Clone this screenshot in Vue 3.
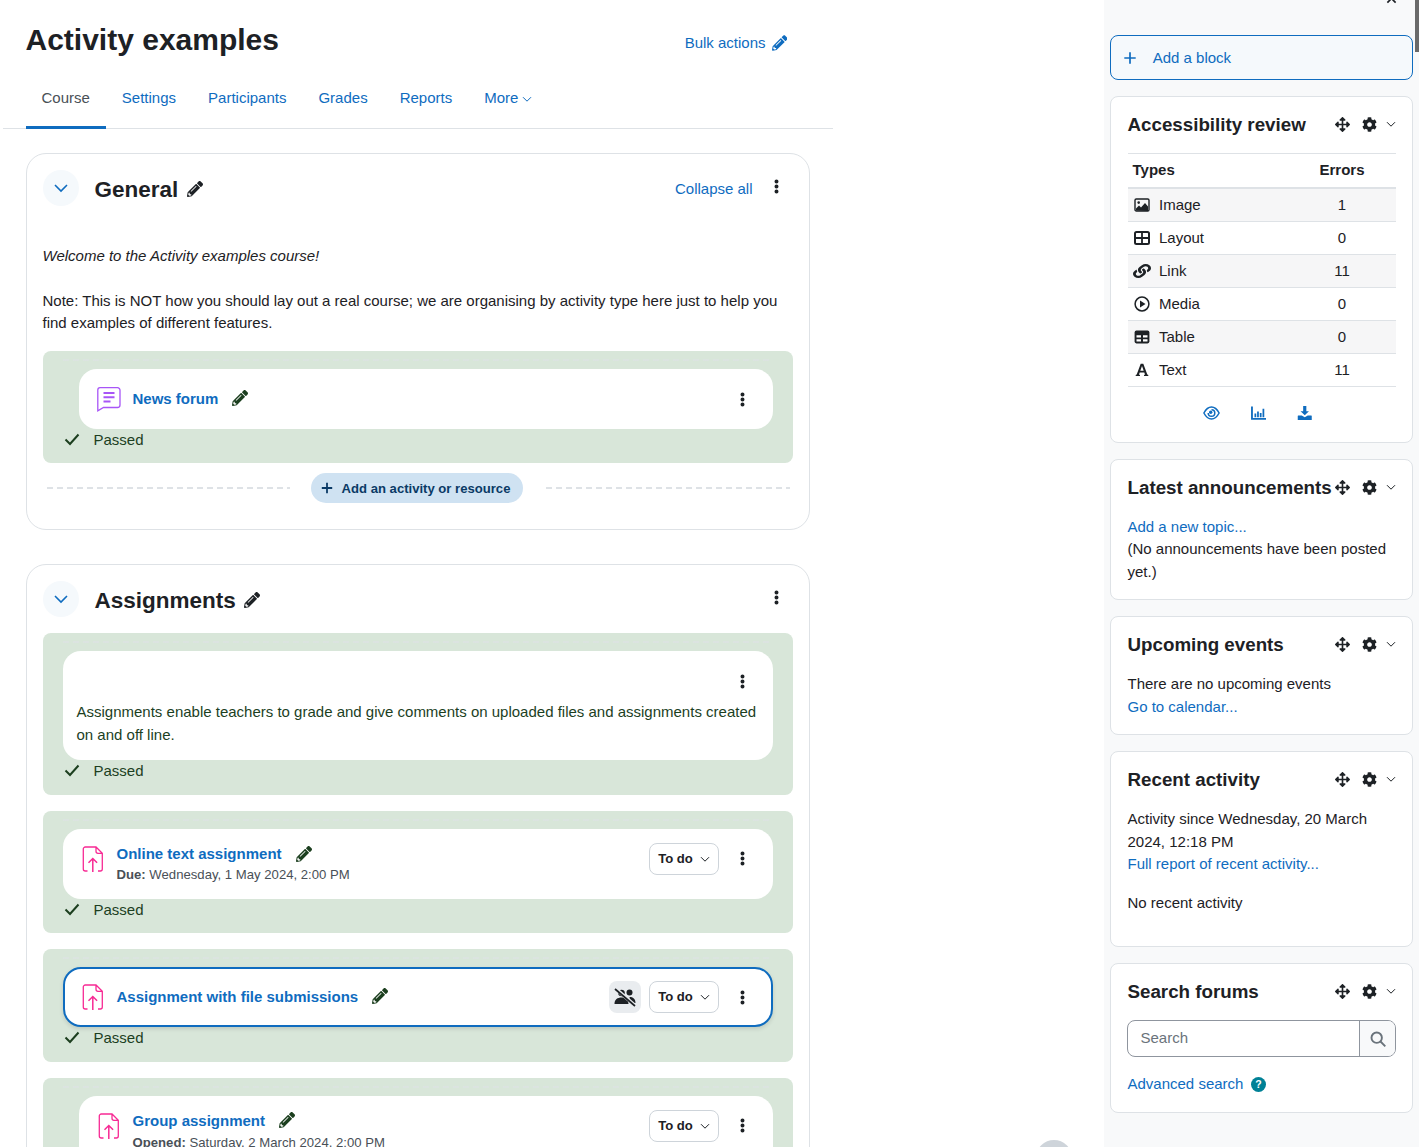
<script setup>
const pencil = 'M497.9 142.1l-46.1 46.1c-4.7 4.7-12.3 4.7-17 0l-111-111c-4.7-4.7-4.7-12.3 0-17l46.1-46.1c18.7-18.7 49.1-18.7 67.9 0l60.1 60.1c18.8 18.7 18.8 49.1 0 67.9zM284.2 99.8L21.6 362.4.4 483.9c-2.9 16.4 11.4 30.6 27.8 27.7l121.5-21.3 262.6-262.6c4.7-4.7 4.7-12.3 0-17l-111-111c-4.8-4.7-12.4-4.7-17.1 0zM124.1 339.9c-5.5-5.5-5.5-14.3 0-19.8l154-154c5.5-5.5 14.3-5.5 19.8 0s5.5 14.3 0 19.8l-154 154c-5.5 5.5-14.3 5.5-19.8 0zM88 424h48v36.3l-64.5 11.3-31.1-31.1L51.7 376H88v48z'
const cog = 'M487.4 315.7l-42.6-24.6c4.3-23.2 4.3-47 0-70.2l42.6-24.6c4.9-2.8 7.1-8.6 5.5-14-11.1-35.6-30-67.8-54.7-94.6-3.8-4.1-10-5.1-14.8-2.3L380.8 110c-17.9-15.4-38.5-27.3-60.8-35.1V25.8c0-5.6-3.9-10.5-9.4-11.7-36.7-8.2-74.3-7.8-109.2 0-5.5 1.2-9.4 6.1-9.4 11.7V75c-22.2 7.9-42.8 19.8-60.8 35.1L88.7 85.5c-4.9-2.8-11-1.9-14.8 2.3-24.7 26.7-43.6 58.9-54.7 94.6-1.7 5.4.6 11.2 5.5 14L67.3 221c-4.3 23.2-4.3 47 0 70.2l-42.6 24.6c-4.9 2.8-7.1 8.6-5.5 14 11.1 35.6 30 67.8 54.7 94.6 3.8 4.1 10 5.1 14.8 2.3l42.6-24.6c17.9 15.4 38.5 27.3 60.8 35.1v49.2c0 5.6 3.9 10.5 9.4 11.7 36.7 8.2 74.3 7.8 109.2 0 5.5-1.2 9.4-6.1 9.4-11.7v-49.2c22.2-7.9 42.8-19.8 60.8-35.1l42.6 24.6c4.9 2.8 11 1.9 14.8-2.3 24.7-26.7 43.6-58.9 54.7-94.6 1.5-5.5-.7-11.3-5.6-14.1zM256 336c-44.1 0-80-35.9-80-80s35.9-80 80-80 80 35.9 80 80-35.9 80-80 80z'
const move = 'M352.201 425.775l-79.196 79.196c-9.373 9.373-24.568 9.373-33.941 0l-79.196-79.196c-15.119-15.119-4.411-40.971 16.971-40.97h51.162L228 284H127.196v51.162c0 21.382-25.851 32.09-40.971 16.971L7.029 272.937c-9.373-9.373-9.373-24.569 0-33.941L86.225 159.8c15.119-15.119 40.971-4.411 40.971 16.971V228H228V127.196h-51.23c-21.382 0-32.09-25.851-16.971-40.971l79.196-79.196c9.373-9.373 24.568-9.373 33.941 0l79.196 79.196c15.119 15.119 4.411 40.971-16.971 40.971h-51.162V228h100.804v-51.162c0-21.382 25.851-32.09 40.97-16.971l79.196 79.196c9.373 9.373 9.373 24.569 0 33.941L425.773 352.2c-15.119 15.119-40.971 4.411-40.97-16.971V284H284v100.804h51.23c21.382 0 32.09 25.851 16.971 40.971z'
const link = 'M326.612 185.391c59.747 59.809 58.927 155.698.36 214.59-.11.12-.24.25-.36.37l-67.2 67.2c-59.27 59.27-155.699 59.262-214.96 0-59.27-59.26-59.27-155.7 0-214.96l37.106-37.106c9.84-9.84 26.786-3.3 27.294 10.606.648 17.722 3.826 35.527 9.69 52.721 1.986 5.822.567 12.262-3.783 16.612l-13.087 13.087c-28.026 28.026-28.905 73.66-1.155 101.96 28.024 28.579 74.086 28.749 102.325.51l67.2-67.19c28.191-28.191 28.073-73.757 0-101.83-3.701-3.694-7.429-6.564-10.341-8.569a16.037 16.037 0 0 1-6.947-12.606c-.396-10.567 3.348-21.456 11.698-29.806l21.054-21.055c5.521-5.521 14.182-6.199 20.584-1.731a152.482 152.482 0 0 1 20.522 17.197zM467.547 44.449c-59.261-59.262-155.69-59.27-214.96 0l-67.2 67.2c-.12.12-.25.25-.36.37-58.566 58.892-59.387 154.781.36 214.59a152.454 152.454 0 0 0 20.521 17.196c6.402 4.468 15.064 3.789 20.584-1.731l21.054-21.055c8.35-8.35 12.094-19.239 11.698-29.806a16.037 16.037 0 0 0-6.947-12.606c-2.912-2.005-6.64-4.875-10.341-8.569-28.073-28.073-28.191-73.639 0-101.83l67.2-67.19c28.239-28.239 74.3-28.069 102.325.51 27.75 28.3 26.872 73.934-1.155 101.96l-13.087 13.087c-4.35 4.35-5.769 10.79-3.783 16.612 5.864 17.194 9.042 34.999 9.69 52.721.509 13.906 17.454 20.446 27.294 10.606l37.106-37.106c59.271-59.259 59.271-155.699.001-214.959z'
const dots = 'M2.500.4a2 2 0 1 1 0 4 2 2 0 0 1 0-4zM2.500 5.500a2 2 0 1 1 0 4 2 2 0 0 1 0-4zM2.500 10.600a2 2 0 1 1 0 4 2 2 0 0 1 0-4z'
const chev = 'M1 3.200 5 7.200 9 3.200'
const tabs = ['Settings', 'Participants', 'Grades', 'Reports']
const a11y = [
  { k: 'image', n: 'Image', e: '1' },
  { k: 'layout', n: 'Layout', e: '0' },
  { k: 'link', n: 'Link', e: '11' },
  { k: 'media', n: 'Media', e: '0' },
  { k: 'table', n: 'Table', e: '0' },
  { k: 'text', n: 'Text', e: '11' }
]
const assignments = [
  { name: 'Online text assignment', label: 'Due:', date: 'Wednesday, 1 May 2024, 2:00 PM', cls: 'tall' },
  { name: 'Assignment with file submissions', nogroup: true, cls: 'focus' },
  { name: 'Group assignment', label: 'Opened:', date: 'Saturday, 2 March 2024, 2:00 PM', cls: 'tall indent' }
]
</script>

<template>
  <div class="page">
    <main class="main">
      <header class="head">
        <h1>Activity examples</h1>
        <a class="bulk">Bulk actions
          <svg class="ic16" viewBox="0 0 512 512"><path :d="pencil" /></svg>
        </a>
      </header>
      <nav class="tabs">
        <a class="tab active">Course</a>
        <a v-for="t in tabs" :key="t" class="tab">{{ t }}</a>
        <a class="tab">More
          <svg class="mini" viewBox="0 0 10 10"><path :d="chev" /></svg>
        </a>
      </nav>

      <section class="section first">
        <div class="sec-head">
          <span class="toggle"><svg viewBox="0 0 16 16"><path d="M2 5 8 11 14 5" /></svg></span>
          <h2>General</h2>
          <svg class="ic16 dark" viewBox="0 0 512 512"><path :d="pencil" /></svg>
          <span class="grow"></span>
          <a class="collapse">Collapse all</a>
          <svg class="dots sec-dots" viewBox="0 0 5 15"><path :d="dots" /></svg>
        </div>
        <div class="summary">
          <p><em>Welcome to the Activity examples course!</em></p>
          <p class="gap">Note: This is NOT how you should lay out a real course; we are organising by activity type here just to help you find examples of different features.</p>
        </div>
        <div class="box">
          <div class="card row indent news">
            <svg class="act-ic" viewBox="0 -1 24 26"><path d="M3 .7h17.500a2.500 2.500 0 0 1 2.500 2.500v14.800a2.500 2.500 0 0 1-2.500 2.500H6.500L.8 23.800V3A2.300 2.300 0 0 1 3 .7z" fill="none" stroke="#a855f7" stroke-width="1.300" /><path d="M6.500 6h11M6.500 10.300h11M6.500 14.600h7" stroke="#a855f7" stroke-width="2" fill="none" /></svg>
            <a class="act-name">News forum</a>
            <svg class="ic16 green" viewBox="0 0 512 512"><path :d="pencil" /></svg>
            <span class="grow"></span>
            <svg class="dots" viewBox="0 0 5 15"><path :d="dots" /></svg>
          </div>
          <div class="passed">
            <svg viewBox="0 0 16 16"><path d="M1.500 8.500 6 13 14.500 3.500" /></svg>
            <span>Passed</span>
          </div>
        </div>
        <div class="add-row">
          <span class="dash"></span>
          <button class="add-btn">
            <svg viewBox="0 0 12 12"><path d="M6 .8v10.400M.8 6h10.400" /></svg>
            Add an activity or resource
          </button>
          <span class="dash"></span>
        </div>
      </section>

      <section class="section second">
        <div class="sec-head">
          <span class="toggle"><svg viewBox="0 0 16 16"><path d="M2 5 8 11 14 5" /></svg></span>
          <h2>Assignments</h2>
          <svg class="ic16 dark" viewBox="0 0 512 512"><path :d="pencil" /></svg>
          <span class="grow"></span>
          <svg class="dots sec-dots" viewBox="0 0 5 15"><path :d="dots" /></svg>
        </div>
        <div class="box">
          <div class="card label-card">
            <div class="label-top">
              <svg class="dots" viewBox="0 0 5 15"><path :d="dots" /></svg>
            </div>
            <p>Assignments enable teachers to grade and give comments on uploaded files and assignments created on and off line.</p>
          </div>
          <div class="passed">
            <svg viewBox="0 0 16 16"><path d="M1.500 8.500 6 13 14.500 3.500" /></svg>
            <span>Passed</span>
          </div>
        </div>
        <div v-for="a in assignments" :key="a.name" class="box">
          <div class="card row" :class="a.cls">
            <svg class="act-ic" viewBox="0 0 24 26"><path d="M6.500 25H4.300a2 2 0 0 1-2-2V3a2 2 0 0 1 2-2h10.700l6.300 6.300V23a2 2 0 0 1-2 2H17M15 1v4.300a2 2 0 0 0 2 2h4.300" fill="none" stroke="#f72a94" stroke-width="1.300" /><path d="M11.800 26V12.500M7.500 16.800l4.300-4.300 4.300 4.300" fill="none" stroke="#f72a94" stroke-width="1.500" /></svg>
            <div class="act-text">
              <div class="act-line">
                <a class="act-name">{{ a.name }}</a>
                <svg class="ic16 green" viewBox="0 0 512 512"><path :d="pencil" /></svg>
              </div>
              <div v-if="a.date" class="meta"><b>{{ a.label }}</b> {{ a.date }}</div>
            </div>
            <span class="grow"></span>
            <span v-if="a.nogroup" class="nogroup">
              <svg viewBox="0 0 24 24"><circle cx="8.500" cy="8" r="3.300" fill="#1d2125" /><circle cx="16.500" cy="7.500" r="3" fill="#1d2125" /><path d="M1.500 19c0-4.500 3-6.500 7-6.500s7 2 7 6.500zM16.500 12c3.500 0 6 1.800 6 6h-5.300" fill="#1d2125" /><path d="M2.500 3.500 22 20.500" stroke="#e9ecef" stroke-width="3.600" /><path d="M2 4 22 21" stroke="#1d2125" stroke-width="1.700" /></svg>
            </span>
            <span class="todo">To do
              <svg class="mini" viewBox="0 0 10 10"><path :d="chev" /></svg>
            </span>
            <svg class="dots" viewBox="0 0 5 15"><path :d="dots" /></svg>
          </div>
          <div class="passed">
            <svg viewBox="0 0 16 16"><path d="M1.500 8.500 6 13 14.500 3.500" /></svg>
            <span>Passed</span>
          </div>
        </div>
      </section>
    </main>

    <span class="back-top"></span>

    <aside class="drawer">
      <span class="thumb"></span>
      <div class="drawer-top">
        <svg viewBox="0 0 12 12"><path d="M1.500 1.500l9 9M10.500 1.500l-9 9" /></svg>
      </div>
      <a class="add-block">
        <svg viewBox="0 0 12 12"><path d="M6 .3v11.400M.3 6h11.400" /></svg>
        <span>Add a block</span>
      </a>

      <div class="block">
        <div class="b-head">
          <h3>Accessibility review</h3>
          <span class="controls">
            <svg class="move" viewBox="0 0 512 512"><path :d="move" /></svg>
            <svg class="cog" viewBox="0 0 512 512"><path :d="cog" /></svg>
            <svg class="mini dk" viewBox="0 0 10 10"><path :d="chev" /></svg>
          </span>
        </div>
        <div class="a-table">
          <div class="a-head"><b>Types</b><b class="err">Errors</b></div>
          <div v-for="r in a11y" :key="r.n" class="a-row">
            <span class="a-ic">
              <svg v-if="r.k === 'image'" viewBox="0 0 16 16"><rect x="1" y="2" width="14" height="12" rx="1.300" fill="none" stroke="#1d2125" stroke-width="1.400" /><circle cx="4.700" cy="5.600" r="1.300" fill="#1d2125" /><path d="M2 13.500V11.500l3-3 2 2 4-4.500 3 3.500v4.500z" fill="#1d2125" /></svg>
              <svg v-else-if="r.k === 'layout'" viewBox="0 0 16 16"><rect x="1" y="2" width="14" height="12" rx="1.500" fill="none" stroke="#1d2125" stroke-width="2" /><path d="M8 2v12M1 8h14" stroke="#1d2125" stroke-width="1.800" /></svg>
              <svg v-else-if="r.k === 'link'" class="chain" viewBox="0 0 512 512" preserveAspectRatio="none"><path :d="link" fill="#1d2125" /></svg>
              <svg v-else-if="r.k === 'media'" viewBox="0 0 16 16"><circle cx="8" cy="8" r="6.900" fill="none" stroke="#1d2125" stroke-width="1.500" /><path d="M6 4.600v6.800L11.500 8z" fill="#1d2125" /></svg>
              <svg v-else-if="r.k === 'table'" viewBox="0 0 16 16"><rect x=".6" y="1.600" width="14.800" height="12.800" rx="1.800" fill="#1d2125" /><path d="M2.500 6.300h4.500v2.300H2.500zM9 6.300h4.500v2.300H9zM2.500 10.200h4.500v2.300H2.500zM9 10.200h4.500v2.300H9z" fill="#fff" /></svg>
              <svg v-else viewBox="0 0 16 16"><path d="M6.700 1.800h2.600l4 10.800 1 .3v1.100H10v-1.100l1-.3-.7-2.100H5.700l-.7 2.100 1 .3v1.100H1.700v-1.100l1-.3zM6.300 8.800h3.400L8 3.900z" fill="#1d2125" /></svg>
            </span>
            <span class="a-name">{{ r.n }}</span>
            <span class="err">{{ r.e }}</span>
          </div>
        </div>
        <div class="a-actions">
          <svg class="w17" viewBox="0 0 17 14"><path d="M.9 7C3 3 5.500 1 8.500 1s5.500 2 7.600 6c-2.100 4-4.600 6-7.600 6S3 11 .9 7z" fill="none" stroke="#0f6cbf" stroke-width="1.500" /><path d="M8.500 3.700a3.300 3.300 0 1 1-3.300 3.300" fill="none" stroke="#0f6cbf" stroke-width="1.500" /><circle cx="7.700" cy="6.300" r="1.700" fill="#0f6cbf" /></svg>
          <svg viewBox="0 0 16 14"><path d="M1 .3v12.700h15" fill="none" stroke="#0f6cbf" stroke-width="1.900" /><path d="M4.500 7.500v3.800M7.200 5.500v5.800M10 7v4.300M12.800 2.500v8.800" stroke="#0f6cbf" stroke-width="1.800" /></svg>
          <svg viewBox="0 0 16 15"><path d="M6.300 0h3.400v5.500h2.800L8 10 3.500 5.500h2.800z" fill="#0f6cbf" /><path d="M1 10.200h3.800L8 12l3.200-1.800H15c.3 0 .5.200.5.500V15H.5v-4.300c0-.3.200-.5.500-.5z" fill="#0f6cbf" /></svg>
        </div>
      </div>

      <div class="block">
        <div class="b-head">
          <h3>Latest announcements</h3>
          <span class="controls">
            <svg class="move" viewBox="0 0 512 512"><path :d="move" /></svg>
            <svg class="cog" viewBox="0 0 512 512"><path :d="cog" /></svg>
            <svg class="mini dk" viewBox="0 0 10 10"><path :d="chev" /></svg>
          </span>
        </div>
        <div class="b-body latest">
          <a>Add a new topic...</a>
          <p>(No announcements have been posted yet.)</p>
        </div>
      </div>

      <div class="block">
        <div class="b-head">
          <h3>Upcoming events</h3>
          <span class="controls">
            <svg class="move" viewBox="0 0 512 512"><path :d="move" /></svg>
            <svg class="cog" viewBox="0 0 512 512"><path :d="cog" /></svg>
            <svg class="mini dk" viewBox="0 0 10 10"><path :d="chev" /></svg>
          </span>
        </div>
        <div class="b-body">
          <p>There are no upcoming events</p>
          <a>Go to calendar...</a>
        </div>
      </div>

      <div class="block">
        <div class="b-head">
          <h3>Recent activity</h3>
          <span class="controls">
            <svg class="move" viewBox="0 0 512 512"><path :d="move" /></svg>
            <svg class="cog" viewBox="0 0 512 512"><path :d="cog" /></svg>
            <svg class="mini dk" viewBox="0 0 10 10"><path :d="chev" /></svg>
          </span>
        </div>
        <div class="b-body recent">
          <p>Activity since Wednesday, 20 March 2024, 12:18 PM</p>
          <a>Full report of recent activity...</a>
          <p class="none">No recent activity</p>
        </div>
      </div>

      <div class="block">
        <div class="b-head">
          <h3>Search forums</h3>
          <span class="controls">
            <svg class="move" viewBox="0 0 512 512"><path :d="move" /></svg>
            <svg class="cog" viewBox="0 0 512 512"><path :d="cog" /></svg>
            <svg class="mini dk" viewBox="0 0 10 10"><path :d="chev" /></svg>
          </span>
        </div>
        <div class="b-body">
          <div class="search">
            <span class="ph">Search</span>
            <span class="s-btn"><svg viewBox="0 0 16 16"><circle cx="6.700" cy="6.700" r="5.200" /><path d="M10.500 10.500 15.300 15.300" /></svg></span>
          </div>
          <div class="adv"><a>Advanced search</a><span class="help">?</span></div>
        </div>
      </div>
    </aside>
  </div>
</template>

<style>
html, body { margin: 0; overflow: hidden; background: #fff; }
</style>

<style scoped>
.page { display: flex; width: 1419px; height: 1147px; overflow: hidden; position: relative; font: 15px/22.5px "Liberation Sans", Arial, sans-serif; color: #1d2125; }
a { color: #0f6cbf; text-decoration: none; }
p { margin: 0; }
svg { display: block; flex: none; }
.grow { flex: 1; }
.main { width: 830px; margin-left: 2.5px; margin-right: 271.5px; flex: none; }
.head { height: 68px; display: flex; justify-content: space-between; padding: 0 45.5px 0 23px; box-sizing: border-box; }
h1 { margin: 22px 0 0; font-size: 30px; line-height: 36px; font-weight: 700; height: 36px; }
.bulk { display: flex; gap: 6px; align-items: center; height: 22px; margin-top: 32px; }
.bulk .ic16 { width: 15.5px; }
.ic16 { width: 16px; height: 16px; fill: #0f6cbf; }
.ic16.dark { fill: #1d2125; margin-top: 2px; }
.ic16.green { fill: #1c3f1f; margin-top: -2px; }
.mini { width: 10px; height: 10px; fill: none; stroke: #0f6cbf; stroke-width: 1; }
.mini.dk { stroke: #1d2125; }
.tabs { display: flex; height: 61px; padding-left: 23px; border-bottom: 1px solid #dee2e6; box-sizing: border-box; }
.tab { display: flex; align-items: center; gap: 4px; padding: 1px 16px 0; height: 60px; box-sizing: border-box; }
.tab.active { color: #495057; border-bottom: 3px solid #0f6cbf; height: 61px; padding-top: 3px; }
.section { margin-left: 23px; width: 784px; box-sizing: border-box; border: 1px solid #dee2e6; border-radius: 20px; padding: 16px 16px 26px; }
.first { margin-top: 24px; }
.second { margin-top: 34px; }
.sec-head { display: flex; align-items: center; height: 36px; }
.toggle { width: 36px; height: 36px; border-radius: 50%; background: #f5f9fc; display: flex; align-items: center; justify-content: center; margin-right: 16px; }
.toggle svg { width: 16px; height: 16px; fill: none; stroke: #0f6cbf; stroke-width: 1.6; }
h2 { margin: 2px 8.5px 0 0; font-size: 22.5px; line-height: 27px; font-weight: 700; }
.collapse { margin: 2px 21px 0 0; }
.dots { width: 5px; height: 15px; fill: #1d2125; margin: 0 27.3px 0 0; }
.sec-dots { margin: -4px 14px 0 0; }
.summary { margin-top: 38.7px; }
.gap { margin-top: 22.5px; }
.box { margin-top: 16px; background: #d8e6d9; border-radius: 8px; padding: 8px 20px 12px; color: #1c3f1f; }
.box::before { content: ""; display: block; height: 2px; margin-bottom: 8px; background: repeating-linear-gradient(90deg, rgba(222, 226, 230, .55) 0 6px, transparent 6px 10px); }
.card { background: #fff; border-radius: 18px; box-sizing: border-box; }
.row { display: flex; align-items: center; height: 60px; padding: 0 0 0 18px; }
.row.news { padding-top: 1px; }
.row .act-ic { margin-right: 12px; width: 24px; height: 26px; }
.indent { margin-left: 16px; }
.tall { height: 70px; }
.tall .act-ic { align-self: flex-start; margin-top: 17px; }
.tall .todo { align-self: flex-start; margin-top: 14px; padding-top: 1px; }
.tall .dots { align-self: flex-start; margin-top: 22px; }
.tall.indent .meta { padding-top: 1.5px; }
.focus { border: 2px solid #0f6cbf; padding-left: 16px; box-shadow: 0 2px 4px rgba(0,0,0,.12); }
.focus .dots { margin-right: 25.3px; }
.act-name { font-weight: 700; color: #0f6cbf; }
.row > .act-name { margin-right: 14px; }
.act-line { display: flex; align-items: center; gap: 14px; }
.meta { font-size: 13.15px; line-height: 18px; color: #495057; }
.passed { display: flex; align-items: center; height: 22.5px; padding-left: 1px; }
.passed svg { width: 16px; height: 16px; fill: none; stroke: #1c3f1f; stroke-width: 2; margin: -2px 14px 0 0; }
.add-row { display: flex; align-items: center; margin-top: 10px; padding: 0 3px 0 4px; }
.dash { flex: 1; height: 2px; background: repeating-linear-gradient(90deg, #dee2e6 0 6px, transparent 6px 10px); }
.add-btn { margin: 0 23px 0 21px; height: 30px; padding: 0 13px 0 10px; border: 0; border-radius: 15px; background: #cfe2f2; color: #0a3a66; font: 700 13.1px "Liberation Sans", Arial, sans-serif; display: flex; align-items: center; gap: 9px; }
.add-btn svg { width: 12px; height: 12px; fill: none; stroke: #0a3a66; stroke-width: 1.8; }
.label-card { padding: 14px 16px 13px 14px; height: 109px; }
.label-top { display: flex; justify-content: flex-end; height: 32px; }
.label-top .dots { margin: 8.5px 11.3px 0 0; }
.label-card p { margin-top: 4px; }
.nogroup { width: 32px; height: 32px; border-radius: 8px; background: #e9ecef; display: flex; align-items: center; justify-content: center; margin-right: 8px; }
.nogroup svg { width: 24px; height: 24px; }
.todo { width: 70px; height: 32px; box-sizing: border-box; border: 1px solid #ced4da; border-radius: 8px; display: flex; align-items: center; padding-left: 8px; gap: 7px; color: #1d2125; font-weight: 700; font-size: 13.1px; margin-right: 21px; }
.todo .mini { stroke: #1d2125; }
.back-top { position: absolute; left: 1036px; top: 1140px; width: 36px; height: 36px; border-radius: 50%; background: #ced4da; }
.drawer { width: 315px; flex: none; background: #f8f9fa; padding: 0 6px; box-sizing: border-box; position: relative; }
.thumb { position: absolute; right: 0; top: 0; width: 4px; height: 52px; background: #6a6a6a; }
.drawer-top { height: 35px; display: flex; justify-content: flex-end; padding-right: 16px; }
.drawer-top svg { width: 11px; height: 11px; margin-top: -7px; fill: none; stroke: #1d2125; stroke-width: 1.8; }
.add-block { height: 45px; box-sizing: border-box; border: 1px solid #0f6cbf; border-radius: 8px; display: flex; align-items: center; padding-left: 13px; background: #f5f9fc; }
.add-block svg { width: 12px; height: 12px; fill: none; stroke: #0f6cbf; stroke-width: 1.7; margin-right: 16.7px; }
.add-block span { padding-top: 1px; }
.block { margin-top: 16px; background: #fff; border: 1px solid #dee2e6; border-radius: 8px; padding: 15px 16px 16px 16.5px; }
.b-head { display: flex; align-items: center; height: 25px; justify-content: space-between; }
h3 { margin: 0; font-size: 18.75px; line-height: 25px; font-weight: 700; white-space: nowrap; }
.controls { display: flex; align-items: center; flex: none; margin-top: -1px; }
.move { width: 15px; height: 15px; fill: #1d2125; margin-right: 12px; }
.cog { width: 15px; height: 15px; fill: #1d2125; margin-right: 9px; }
.a-table { margin-top: 16px; }
.a-head { display: flex; height: 33px; align-items: center; border-top: 1px solid #dee2e6; border-bottom: 2px solid #dee2e6; box-sizing: content-box; padding-left: 5px; }
.a-head b:first-child { flex: 1; }
.err { width: 108px; text-align: center; flex: none; }
.a-row { display: flex; align-items: center; height: 32px; border-bottom: 1px solid #dee2e6; padding-left: 5px; }
.a-row:nth-child(even) { background: #f6f6f7; }
.a-ic { width: 18px; height: 16px; margin-right: 8.5px; display: flex; justify-content: center; align-items: center; }
.a-ic svg { height: 16px; width: auto; max-width: 18px; }
.a-ic svg.chain { width: 18px; height: 14px; }
.a-name { flex: 1; }
.a-actions { display: flex; align-items: center; gap: 31px; height: 39px; padding: 13px 0 0 75px; box-sizing: border-box; }
.a-actions svg { height: 14px; width: 15.5px; }
.a-actions .w17 { width: 17px; }
.b-body { margin-top: 16px; }
.b-body.latest { margin-top: 15.7px; }
.recent { padding-bottom: 15.5px; }
.none { margin-top: 16.5px; }
.search { display: flex; height: 37px; box-sizing: border-box; border: 1px solid #8f959e; border-radius: 8px; overflow: hidden; margin-left: -0.5px; }
.ph { flex: 1; padding-left: 12.5px; line-height: 34px; color: #6a737b; }
.s-btn { width: 35px; border-left: 1px solid #8f959e; background: #f8f9fa; display: flex; align-items: center; justify-content: center; }
.s-btn svg { width: 16px; height: 16px; fill: none; stroke: #6a737b; stroke-width: 1.9; }
.adv { display: flex; align-items: center; margin-top: 16px; gap: 7.5px; }
.help { width: 15px; height: 15px; border-radius: 50%; background: #008196; color: #fff; font-size: 10.5px; line-height: 15px; font-weight: 700; text-align: center; }
</style>
